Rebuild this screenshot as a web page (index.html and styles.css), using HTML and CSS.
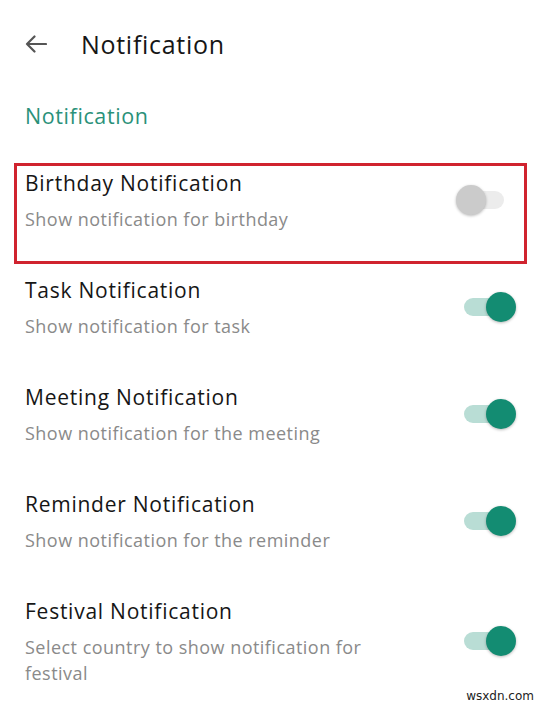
FILE: index.html
```html
<!DOCTYPE html>
<html lang="en">
<head>
<meta charset="utf-8">
<title>Notification</title>
<link rel="stylesheet" href="styles.css">
</head>
<body>
<div class="screen">
  <header class="appbar">
    <svg class="back" width="22" height="18" viewBox="0 0 22 18" aria-hidden="true">
      <path d="M21 9H2M9.5 1.5L2 9l7.5 7.5" fill="none" stroke="#555" stroke-width="2.2" stroke-linecap="round" stroke-linejoin="round"/>
    </svg>
    <h1 class="appbar-title">Notification</h1>
  </header>

  <h2 class="section-title">Notification</h2>

  <div class="list">
    <div class="row highlight">
      <div class="row-inner">
        <div class="texts">
          <div class="title">Birthday Notification</div>
          <div class="sub">Show notification for birthday</div>
        </div>
        <div class="toggle off"><span class="track"></span><span class="thumb"></span></div>
      </div>
    </div>
    <div class="row">
      <div class="row-inner">
        <div class="texts">
          <div class="title">Task Notification</div>
          <div class="sub">Show notification for task</div>
        </div>
        <div class="toggle on"><span class="track"></span><span class="thumb"></span></div>
      </div>
    </div>
    <div class="row">
      <div class="row-inner">
        <div class="texts">
          <div class="title">Meeting Notification</div>
          <div class="sub">Show notification for the meeting</div>
        </div>
        <div class="toggle on"><span class="track"></span><span class="thumb"></span></div>
      </div>
    </div>
    <div class="row">
      <div class="row-inner">
        <div class="texts">
          <div class="title">Reminder Notification</div>
          <div class="sub">Show notification for the reminder</div>
        </div>
        <div class="toggle on"><span class="track"></span><span class="thumb"></span></div>
      </div>
    </div>
    <div class="row">
      <div class="row-inner">
        <div class="texts">
          <div class="title">Festival Notification</div>
          <div class="sub narrow">Select country to show notification for festival</div>
        </div>
        <div class="toggle on"><span class="track"></span><span class="thumb"></span></div>
      </div>
    </div>
  </div>

  <div class="watermark">wsxdn.com</div>
</div>
</body>
</html>
```

FILE: styles.css
```css
html, body {
  margin: 0;
  padding: 0;
  background: #ffffff;
}

.screen {
  position: relative;
  width: 540px;
  height: 708px;
  overflow: hidden;
  font-family: "Open Sans", "Liberation Sans", sans-serif;
  color: #161616;
}

.appbar {
  height: 88px;
  display: flex;
  align-items: center;
  padding-left: 25px;
  box-sizing: border-box;
}

.back {
  display: block;
  width: 22px;
  height: 18px;
}

.appbar-title {
  margin: 0 0 0 34px;
  font-size: 25px;
  font-weight: 500;
  letter-spacing: 0.7px;
  line-height: 30px;
  color: #161616;
}

.section-title {
  margin: 13px 0 32px 25px;
  font-size: 21.5px;
  font-weight: 500;
  letter-spacing: 0.6px;
  line-height: 30px;
  color: #2a9179;
}

.list {
  display: flex;
  flex-direction: column;
  gap: 6px;
  padding: 0 13px 0 14px;
}

.row {
  height: 101px;
  box-sizing: border-box;
  padding: 5px 11px 0;
}

.row.highlight {
  outline: 3px solid #d0232f;
  outline-offset: -3px;
}

.row-inner {
  display: flex;
  align-items: center;
  justify-content: space-between;
}

.texts {
  display: flex;
  flex-direction: column;
  gap: 8px;
}

.title {
  font-size: 21px;
  letter-spacing: 0.75px;
  line-height: 30px;
  color: #161616;
}

.sub {
  font-size: 18px;
  letter-spacing: 0.47px;
  line-height: 26px;
  color: #8a8a8a;
}

.sub.narrow {
  max-width: 350px;
}

.toggle {
  position: relative;
  width: 60px;
  height: 30px;
  flex: none;
}

.track {
  position: absolute;
  top: 6px;
  height: 18px;
  border-radius: 9px;
}

.thumb {
  position: absolute;
  top: 0;
  width: 30px;
  height: 30px;
  border-radius: 50%;
  box-shadow: 0 1px 3px rgba(0, 0, 0, 0.28);
}

.toggle.on .track { left: 8px; width: 44px; background: #b9ddd5; }
.toggle.on .thumb { left: 30px; background: #138c72; }

.toggle.off .track { left: 6px; width: 42px; background: #ececec; }
.toggle.off .thumb { left: 0; background: #cbcbcb; }

.watermark {
  position: absolute;
  right: 6px;
  bottom: 5px;
  font-family: "DejaVu Sans", sans-serif;
  font-size: 12px;
  color: #222;
}
```
